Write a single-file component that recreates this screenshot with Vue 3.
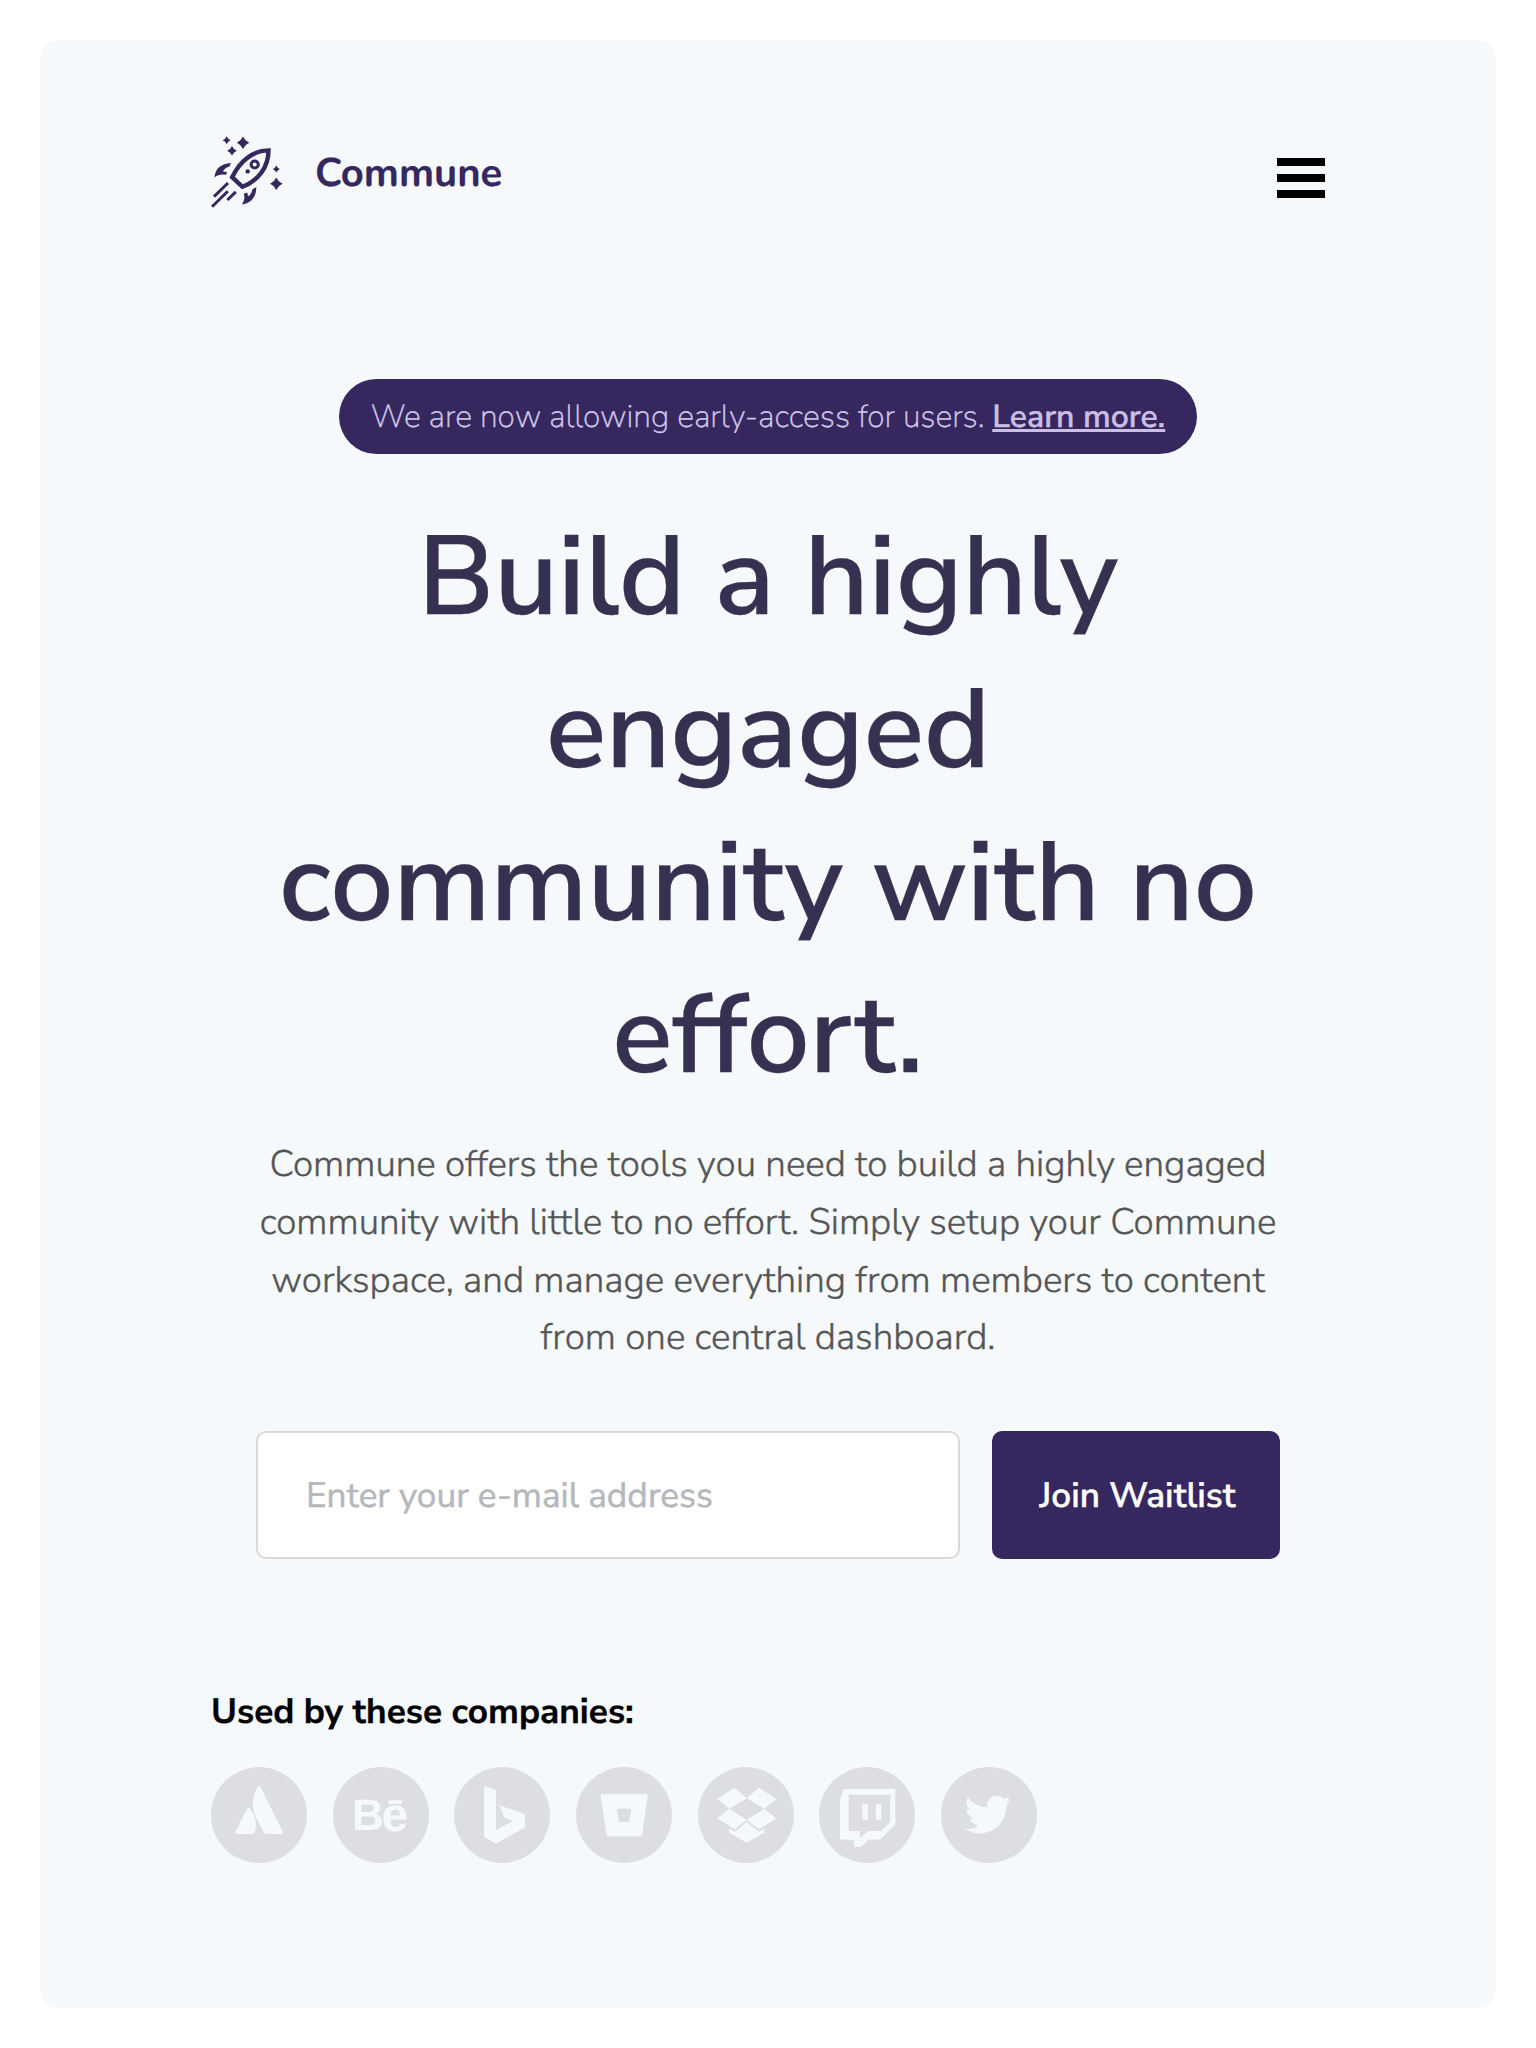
<script setup>
const headline = ['Build a highly', 'engaged', 'community with no', 'effort.']
const intro = [
  'Commune offers the tools you need to build a highly engaged',
  'community with little to no effort. Simply setup your Commune',
  'workspace, and manage everything from members to content',
  'from one central dashboard.',
]
const stars = [
  [15.7, 4.3, 4],
  [32, 6.7, 6.2],
  [21, 14.7, 4.8],
  [65.3, 33, 3.6],
  [65.3, 47.7, 6.2],
]
</script>

<template>
  <div class="page">
    <main class="card">
      <header class="header">
        <a class="brand">
          <svg class="logo" viewBox="0 0 72 72" fill="currentColor">
            <path
              v-for="([x, y, r], i) in stars"
              :key="i"
              :transform="`translate(${x} ${y}) scale(${r})`"
              d="M0-1Q.3-.3 1 0Q.3 .3 0 1Q-.3 .3-1 0Q-.3-.3 0-1Z"
            />
            <path d="M57.5 14.4C42 14.4 29 25 21.2 41.2L31.4 50.8C47.4 44.4 57.5 31 57.5 14.4Z" fill="none" stroke="currentColor" stroke-width="4.4" />
            <circle cx="43.7" cy="28.5" r="3.6" fill="none" stroke="currentColor" stroke-width="3" />
            <circle cx="36.7" cy="35.4" r="2.2" />
            <path d="M19.9 27C10.5 27.6 4 32.5 3.5 41.5C7 38.5 11 38.2 15 39L16 36L11.8 35.4C13.5 32.5 16.5 30.8 18.6 30.4Z" />
            <path d="M45.3 51.3C45.4 60.5 40.5 67.5 30.7 68.6C33.5 65 34 61 32.7 57.7L36.2 56.6L37.2 60.2C39.6 58.8 41 56 41.6 53Z" />
            <path d="M17 47L3 60.6M16.8 55.2L1 70.8M24.8 55.9L16.4 64" fill="none" stroke="currentColor" stroke-width="3" />
          </svg>
          <span class="brand-name">Commune</span>
        </a>
        <button class="menu" aria-label="Menu"><i></i><i></i><i></i></button>
      </header>

      <section class="hero">
        <p class="notice">We are now allowing early-access for users. <a class="more">Learn more.</a></p>
        <h1 class="headline">
          <span v-for="l in headline" :key="l" class="line">{{ l }}</span>
        </h1>
        <p class="intro">
          <span v-for="l in intro" :key="l" class="line">{{ l }}</span>
        </p>
        <form class="form" @submit.prevent>
          <input class="email" type="email" placeholder="Enter your e-mail address" />
          <button class="join">Join Waitlist</button>
        </form>
      </section>

      <section class="companies">
        <h2 class="label">Used by these companies:</h2>
        <div class="logos">
          <svg viewBox="0 0 96 96">
            <circle cx="48" cy="48" r="48" />
            <path class="mark" d="M46.8 19.6Q48 17.8 49.3 19.6L71.8 65Q72.4 67 70.5 67H55.3Q53.5 67 52.6 65.3L44.5 49C40 39 41.5 28 46.8 19.6ZM36 41.8Q37.5 39.7 39.3 42C44.5 48.5 46.5 57.5 43.8 65Q43.2 67 41.3 67H25.5Q23.6 67 24.4 65Z" />
          </svg>
          <svg viewBox="0 0 96 96">
            <circle cx="48" cy="48" r="48" />
            <text class="mark letter" x="19" y="63" font-size="44">B</text>
            <text class="mark letter" x="48.6" y="63.6" font-size="48">e</text>
            <rect class="mark" x="55.3" y="33.2" width="13.8" height="3.8" />
          </svg>
          <svg viewBox="0 0 96 96">
            <circle cx="48" cy="48" r="48" />
            <path class="mark" d="M30 19L42 23V63L58.3 54.3L50.3 50.3L45.3 38.3L71 47V60.3L42 76.7L30 70Z" />
          </svg>
          <svg viewBox="0 0 96 96">
            <circle cx="48" cy="48" r="48" />
            <path class="mark" fill-rule="evenodd" d="M25.5 27.3H71Q71.9 27.3 71.8 28.2L66 68.5Q65.8 69.3 65 69.3H31.6Q30.9 69.3 30.7 68.5L24.7 28.2Q24.6 27.3 25.5 27.3ZM40.7 41.7L43 55H53.3L55.3 41.7Z" />
          </svg>
          <svg viewBox="0 0 96 96">
            <circle cx="48" cy="48" r="48" />
            <path class="mark" d="M36.3 20.7L48.7 31.2L31.3 41.7L19.3 32ZM61 20.7L78.3 32L66.3 41.7L48.7 31.2ZM31.3 41.7L48.7 53L36.7 62.3L19.3 51.3ZM66.3 41.7L78.3 51.3L61 62.3L48.7 53ZM48.7 55L61 65L66.3 61.7V65.7L48.7 75.7L31.3 65.7V61.7L36.7 65Z" />
          </svg>
          <svg viewBox="0 0 96 96">
            <circle cx="48" cy="48" r="48" />
            <path class="mark" fill-rule="evenodd" d="M25 22H76.3V57.3L61 72.7H49.3L42 80H35V72.7H21V31.7ZM29.7 27.7V64H41V71L48.7 64H62.3L71.3 55V27.7ZM43.3 37H48.7V52.7H43.3ZM56.8 37H62.2V52.7H56.8Z" />
          </svg>
          <svg viewBox="0 0 96 96">
            <circle cx="48" cy="48" r="48" />
            <path class="mark" transform="translate(23.7 24.4) scale(1.93)" d="M23.953 4.57a10 10 0 01-2.825.775 4.958 4.958 0 002.163-2.723c-.951.555-2.005.959-3.127 1.184a4.92 4.92 0 00-8.384 4.482C7.69 8.095 4.067 6.13 1.64 3.162a4.822 4.822 0 00-.666 2.475c0 1.71.87 3.213 2.188 4.096a4.904 4.904 0 01-2.228-.616v.06a4.923 4.923 0 003.946 4.827 4.996 4.996 0 01-2.212.085 4.936 4.936 0 004.604 3.417 9.867 9.867 0 01-6.102 2.105c-.39 0-.779-.023-1.17-.067a13.995 13.995 0 007.557 2.209c9.053 0 13.998-7.496 13.998-13.985 0-.21 0-.42-.015-.63A9.935 9.935 0 0024 4.59z" />
          </svg>
        </div>
      </section>
    </main>
  </div>
</template>

<style>
body {
  background: #fff;
}
</style>

<style scoped>
.page {
  box-sizing: border-box;
  height: 2048px;
  padding: 40px;
  font-family: 'Nunito Sans', Nunito, Lato, 'Liberation Sans', sans-serif;
  text-rendering: geometricPrecision;
}
.card {
  box-sizing: border-box;
  height: 100%;
  padding: 96px 171px 0;
  border-radius: 20px;
  background: #f5f9fc;
}
.header {
  display: flex;
  align-items: center;
  justify-content: space-between;
  height: 72px;
}
.brand {
  display: flex;
  align-items: center;
  gap: 32px;
  color: #36275f;
}
.logo {
  width: 72px;
  height: 72px;
}
.brand-name {
  padding-top: 3px;
  font-family: Nunito, Lato, 'Liberation Sans', sans-serif;
  font-size: 40px;
  font-weight: 700;
  line-height: 48px;
  -webkit-text-stroke: 0.2px;
}
.menu {
  display: flex;
  flex-direction: column;
  gap: 8px;
  width: 48px;
  margin-top: 12px;
  padding: 0;
  border: 0;
  background: none;
}
.menu i {
  height: 8px;
  background: #000;
}
.hero {
  display: flex;
  flex-direction: column;
  align-items: center;
  margin-top: 171px;
  text-align: center;
}
.notice {
  box-sizing: border-box;
  width: 858px;
  height: 75px;
  margin: 0;
  border-radius: 38px;
  background: #36275f;
  color: #d3c8ea;
  font-size: 32px;
  font-weight: 200;
  line-height: 77px;
  white-space: nowrap;
  -webkit-text-stroke: 0.35px;
}
.more {
  font-weight: 600;
  color: #cbbfe4;
  text-decoration: underline;
  text-decoration-thickness: 3px;
  text-underline-offset: 2px;
  text-decoration-skip-ink: none;
}
.line {
  display: block;
  white-space: nowrap;
}
.headline {
  margin: 48px 0 0;
  color: #363151;
  font-size: 112px;
  font-weight: 600;
  line-height: 152.8px;
  -webkit-text-stroke: 0.3px;
}
.intro {
  margin: 23.2px 0 0;
  color: #555;
  font-size: 36.8px;
  font-weight: 300;
  line-height: 57.7px;
  -webkit-text-stroke: 0.35px;
}
.form {
  display: flex;
  gap: 32px;
  width: 1024px;
  height: 128px;
  margin-top: 63.8px;
}
.email {
  box-sizing: border-box;
  width: 704px;
  padding: 2px 48px 0;
  border: 2px solid #d9d9d9;
  border-radius: 10px;
  background: #fff;
  font: inherit;
  font-size: 35.2px;
  font-weight: 400;
  text-rendering: inherit;
}
.email::placeholder {
  color: #b4b8bc;
  opacity: 1;
  -webkit-text-stroke: 0.5px #b4b8bc;
}
.join {
  flex: 1;
  padding: 2px 0 0 3px;
  border: 0;
  border-radius: 10px;
  background: #36275f;
  color: #fff;
  font: inherit;
  font-size: 35.2px;
  font-weight: 600;
  text-rendering: inherit;
  -webkit-text-stroke: 0.4px;
}
.companies {
  margin-top: 129px;
}
.label {
  margin: 0;
  color: #000;
  font-size: 35.2px;
  font-weight: 700;
  line-height: 49px;
  -webkit-text-stroke: 0.3px;
}
.logos {
  display: flex;
  gap: 25.67px;
  margin-top: 30px;
}
.logos svg {
  width: 96px;
  height: 96px;
  fill: #dddee3;
}
.logos .mark {
  fill: #f5f9fc;
}
.letter {
  font-family: 'Liberation Sans', Arial, sans-serif;
  font-weight: 700;
}
</style>
